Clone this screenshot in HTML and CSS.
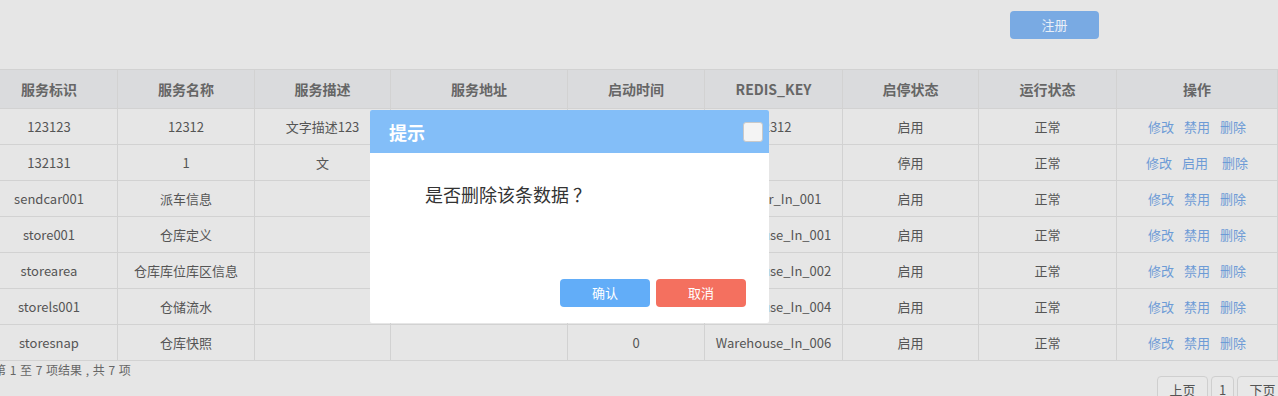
FILE: index.html
```html
<!DOCTYPE html>
<html lang="zh-CN">
<head>
<meta charset="utf-8">
<title>服务列表</title>
<link rel="stylesheet" href="styles.css">
</head>
<body>
<div class="page">
  <div class="topbar">
    <button class="btn-register">注册</button>
  </div>
  <table class="grid">
    <colgroup>
      <col class="c1"><col class="c2"><col class="c3"><col class="c4"><col class="c5"><col class="c6"><col class="c7"><col class="c8"><col class="c9">
    </colgroup>
    <thead>
      <tr>
        <th>服务标识</th><th>服务名称</th><th>服务描述</th><th>服务地址</th><th>启动时间</th><th>REDIS_KEY</th><th>启停状态</th><th>运行状态</th><th>操作</th>
      </tr>
    </thead>
    <tbody>
      <tr><td>123123</td><td>12312</td><td>文字描述123</td><td></td><td>0</td><td>12312</td><td>启用</td><td>正常</td><td class="ops"><a>修改</a><a>禁用</a><a>删除</a></td></tr>
      <tr><td>132131</td><td>1</td><td>文</td><td></td><td>0</td><td></td><td>停用</td><td>正常</td><td class="ops ops-alt"><a>修改</a><a>启用</a><a class="wide">删除</a></td></tr>
      <tr><td>sendcar001</td><td>派车信息</td><td></td><td></td><td>0</td><td>sendcar_In_001</td><td>启用</td><td>正常</td><td class="ops"><a>修改</a><a>禁用</a><a>删除</a></td></tr>
      <tr><td>store001</td><td>仓库定义</td><td></td><td></td><td>0</td><td>Warehouse_In_001</td><td>启用</td><td>正常</td><td class="ops"><a>修改</a><a>禁用</a><a>删除</a></td></tr>
      <tr><td>storearea</td><td>仓库库位库区信息</td><td></td><td></td><td>0</td><td>Warehouse_In_002</td><td>启用</td><td>正常</td><td class="ops"><a>修改</a><a>禁用</a><a>删除</a></td></tr>
      <tr><td>storels001</td><td>仓储流水</td><td></td><td></td><td>0</td><td>Warehouse_In_004</td><td>启用</td><td>正常</td><td class="ops"><a>修改</a><a>禁用</a><a>删除</a></td></tr>
      <tr><td>storesnap</td><td>仓库快照</td><td></td><td></td><td>0</td><td>Warehouse_In_006</td><td>启用</td><td>正常</td><td class="ops"><a>修改</a><a>禁用</a><a>删除</a></td></tr>
    </tbody>
  </table>
  <div class="footer">
    <div class="info">第 1 至 7 项结果 , 共 7 项</div>
    <div class="pager">
      <span class="pg">上页</span><span class="pg num">1</span><span class="pg">下页</span>
    </div>
  </div>
</div>

<div class="dialog">
  <div class="dlg-head">
    <span class="dlg-title">提示</span>
    <span class="dlg-close"></span>
  </div>
  <div class="dlg-body">是否删除该条数据 ？</div>
  <div class="dlg-foot">
    <button class="dbtn ok">确认</button>
    <button class="dbtn cancel">取消</button>
  </div>
</div>
</body>
</html>
```
FILE: styles.css
```css
html, body {
  margin: 0;
  padding: 0;
  background: #e6e6e6;
  overflow: hidden;
}
body {
  width: 1278px;
  height: 396px;
  font-family: "Noto Sans CJK SC", "Noto Sans", sans-serif;
  color: #555;
  position: relative;
}
.page {
  margin-left: -20px;
  width: 1320px;
}
.topbar {
  height: 69px;
  display: flex;
  justify-content: flex-end;
  align-items: flex-start;
  padding-right: 201px;
  box-sizing: border-box;
}
.btn-register {
  margin-top: 11px;
  width: 89px;
  height: 28px;
  border: none;
  border-radius: 4px;
  background: #79aae3;
  color: #e9eff8;
  font-family: inherit;
  font-size: 13px;
  line-height: 28px;
  padding: 0;
}
.grid {
  border-collapse: collapse;
  table-layout: fixed;
  width: 1297px;
}
.c1 { width: 137px; }
.c2 { width: 137px; }
.c3 { width: 136px; }
.c4 { width: 177px; }
.c5 { width: 137px; }
.c6 { width: 138px; }
.c7 { width: 136px; }
.c8 { width: 138px; }
.c9 { width: 161px; }
.grid th, .grid td {
  border: 1px solid #d2d2d2;
  text-align: center;
  padding: 0;
  white-space: nowrap;
  overflow: hidden;
}
.grid th {
  height: 38px;
  background: #dadbdd;
  color: #666;
  font-size: 14px;
  font-weight: bold;
  line-height: 20px;
}
.grid td {
  height: 35px;
  font-size: 13px;
  line-height: 18px;
  color: #555;
}
.ops a {
  color: #6d9bd6;
  margin: 0 5px;
}
.ops-alt a { margin: 0 5px; }
.ops-alt a.wide { margin-left: 9px; }
.footer {
  display: flex;
  justify-content: space-between;
  align-items: flex-start;
  padding-left: 14px;
  width: 1318px;
  box-sizing: border-box;
}
.info {
  font-size: 12px;
  color: #666;
  line-height: 16px;
  padding-top: 1px;
  word-spacing: 1px;
}
.pager {
  display: flex;
  gap: 3px;
  padding-top: 15px;
  margin-right: 10px;
}
.pg {
  display: inline-block;
  height: 28px;
  box-sizing: border-box;
  border: 1px solid #cfcfcf;
  border-radius: 4px;
  background: #e8e8e8;
  color: #555;
  font-size: 13px;
  line-height: 26px;
  width: 51px;
  text-align: center;
}
.pg.num { width: 23px; }
.dialog {
  position: absolute;
  left: 370px;
  top: 110px;
  width: 399px;
  height: 213px;
  background: #fff;
  border-radius: 2px;
  overflow: hidden;
  display: flex;
  flex-direction: column;
}
.dlg-head {
  height: 43px;
  background: #83bef8;
  display: flex;
  align-items: center;
  justify-content: space-between;
  padding: 0 6px 0 19px;
}
.dlg-title {
  color: #fff;
  font-size: 18px;
  font-weight: bold;
  line-height: 24px;
}
.dlg-close {
  width: 20px;
  height: 20px;
  box-sizing: border-box;
  border: 1px solid #c9c9c9;
  border-radius: 3px;
  background: #f4f4f4;
  margin-top: 1px;
}
.dlg-body {
  padding: 28px 0 0 55px;
  height: 98px;
  box-sizing: border-box;
  font-size: 18px;
  line-height: 26px;
  color: #333;
}
.dlg-foot {
  display: flex;
  justify-content: flex-end;
  gap: 6px;
  padding: 28px 23px 0 0;
}
.dbtn {
  width: 90px;
  height: 28px;
  border: none;
  border-radius: 4px;
  color: #fff;
  font-family: inherit;
  font-size: 13px;
  line-height: 28px;
  padding: 0;
}
.dbtn.ok { background: #62adf8; }
.dbtn.cancel { background: #f4705f; }
```
